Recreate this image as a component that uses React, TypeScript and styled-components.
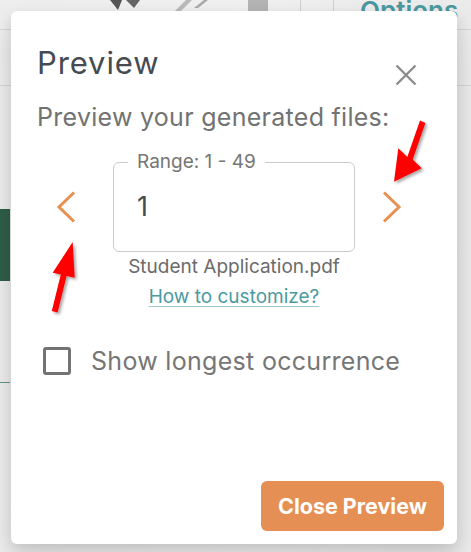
import { FC } from "react"
import styled, { createGlobalStyle } from "styled-components"

const GlobalStyle = createGlobalStyle`
	html, body {
		margin: 0;
		padding: 0;
		width: 471px;
		height: 552px;
		overflow: hidden;
		font-family: Inter, "Liberation Sans", sans-serif;
	}
`

const App: FC = () => {
	return (
		<Page>
			<GlobalStyle />
			<AppBackdrop>
				<TopBar>
					<ToolIcon width="34" height="12" viewBox="0 0 34 12">
						<path d="M2 0 L14 0 L10 10 Z" fill="#555" />
						<path d="M18 0 L32 0 L26 8 Z" fill="#666" />
					</ToolIcon>
					<ToolIcon width="34" height="12" viewBox="0 0 34 12">
						<path d="M0 12 L12 0 L18 0 L6 12 Z" fill="#bbb" />
						<path d="M20 8 L30 0 L34 0 L24 8 Z" fill="#aaa" />
					</ToolIcon>
					<GrayBlock />
					<Divider />
					<Divider />
					<OptionsTab>Options</OptionsTab>
				</TopBar>
				<SubBar />
				<SideContent>
					<GreenBlock />
					<GreenLine />
				</SideContent>
			</AppBackdrop>

			<Dialog>
				<Header>
					<Title>Preview</Title>
					<CloseButton aria-label="close">
						<svg width="22" height="22" viewBox="0 0 22 22">
							<path
								d="M1.5 1.5 L20.5 20.5 M20.5 1.5 L1.5 20.5"
								stroke="#8c8c8c"
								strokeWidth="2.4"
								fill="none"
							/>
						</svg>
					</CloseButton>
				</Header>
				<Subtitle>Preview your generated files:</Subtitle>

				<PagerRow>
					<NavButton side="left" aria-label="previous">
						<svg width="20" height="32" viewBox="0 0 20 32">
							<polyline
								points="18,1.5 3,16 18,30.5"
								stroke="#e8904f"
								strokeWidth="3"
								fill="none"
							/>
						</svg>
					</NavButton>
					<FieldColumn>
						<FieldBox>
							<FieldLegend>Range: 1 - 49</FieldLegend>
							<FieldValue>1</FieldValue>
						</FieldBox>
						<FileName>Student Application.pdf</FileName>
						<HelpLink href="#">How to customize?</HelpLink>
					</FieldColumn>
					<NavButton side="right" aria-label="next">
						<svg width="20" height="32" viewBox="0 0 20 32">
							<polyline
								points="2,1.5 17,16 2,30.5"
								stroke="#e8904f"
								strokeWidth="3"
								fill="none"
							/>
						</svg>
					</NavButton>
				</PagerRow>

				<CheckRow>
					<CheckBox />
					<CheckLabel>Show longest occurrence</CheckLabel>
				</CheckRow>

				<Footer>
					<PrimaryButton>Close Preview</PrimaryButton>
				</Footer>
			</Dialog>

			{/* red annotation arrows drawn on top of the screenshot */}
			<Annotations width="471" height="552" viewBox="0 0 471 552">
				<defs>
					<filter id="arrowShadow" x="-50%" y="-50%" width="200%" height="200%">
						<feDropShadow dx="2" dy="2" stdDeviation="1.5" floodColor="#000" floodOpacity="0.35" />
					</filter>
				</defs>
				<polygon
					filter="url(#arrowShadow)"
					fill="#ff0000"
					points="72.7,242 74.7,277.7 66.6,276 57.6,312.4 51.8,311 60.8,274.5 52.7,272.7"
				/>
				<polygon
					filter="url(#arrowShadow)"
					fill="#ff0000"
					points="394,181.7 398.3,148.3 407.3,157 420,120.4 425.4,123 412.7,159.6 421.7,168.3"
				/>
			</Annotations>
		</Page>
	)
}

const Page = styled.div`
	position: relative;
	width: 471px;
	height: 552px;
	overflow: hidden;
	background: linear-gradient(90deg, #eeeeee 0%, #f1f1f1 50%, #ebebeb 100%);
`

const AppBackdrop = styled.div`
	display: flex;
	flex-direction: column;
	height: 100%;
`

const TopBar = styled.div`
	display: flex;
	align-items: flex-start;
	height: 29px;
	border-bottom: 1px solid #d6d6d6;
	padding-left: 108px;
	gap: 32px;
`

const ToolIcon = styled.svg`
	display: block;
`

const GrayBlock = styled.div`
	width: 20px;
	height: 12px;
	background: #b5b5b5;
	margin-left: 8px;
`

const Divider = styled.div`
	width: 1px;
	height: 12px;
	background: #d0d0d0;
`

const OptionsTab = styled.div`
	margin-left: -6px;
	margin-top: -4px;
	font-size: 26px;
	line-height: 30px;
	font-weight: 600;
	color: #4b9aa0;
`

const SubBar = styled.div`
	height: 55px;
	border-bottom: 1px solid #d6d6d6;
`

const SideContent = styled.div`
	display: flex;
	flex-direction: column;
	padding-top: 123px;
`

const GreenBlock = styled.div`
	width: 10px;
	height: 72px;
	background: #2f5f4a;
`

const GreenLine = styled.div`
	width: 10px;
	height: 1px;
	margin-top: 101px;
	background: #5d9a84;
`

const Dialog = styled.div`
	position: absolute;
	top: 11px;
	left: 11px;
	width: 446px;
	height: 533px;
	box-sizing: border-box;
	display: flex;
	flex-direction: column;
	padding: 34px 0 13px;
	background: #ffffff;
	border-radius: 6px;
	box-shadow: 0 6px 14px rgba(0, 0, 0, 0.12), 0 14px 34px rgba(0, 0, 0, 0.1);
`

const Header = styled.div`
	display: flex;
	justify-content: space-between;
	align-items: flex-start;
	padding: 0 40px 0 26px;
`

const Title = styled.h2`
	margin: 0;
	font-size: 31px;
	line-height: 36px;
	font-weight: 400;
	letter-spacing: 0.9px;
	color: #464b51;
`

const CloseButton = styled.button`
	margin-top: 19px;
	padding: 0;
	border: none;
	background: none;
	width: 22px;
	height: 22px;
	cursor: pointer;

	svg {
		display: block;
	}
`

const Subtitle = styled.p`
	margin: 16px 26px 0;
	font-size: 25px;
	line-height: 30px;
	letter-spacing: 0.28px;
	color: #727272;
`

const PagerRow = styled.div`
	display: flex;
	align-items: flex-start;
	margin-top: 30px;
	padding-left: 45px;
`

const NavButton = styled.button<{ side: "left" | "right" }>`
	margin-top: 29px;
	margin-left: ${props => (props.side === "right" ? "27px" : "0")};
	margin-right: ${props => (props.side === "left" ? "37px" : "0")};
	padding: 0;
	border: none;
	background: none;
	cursor: pointer;

	svg {
		display: block;
	}
`

const FieldColumn = styled.div`
	display: flex;
	flex-direction: column;
	align-items: center;
	width: 242px;
`

const FieldBox = styled.div`
	position: relative;
	box-sizing: border-box;
	width: 242px;
	height: 90px;
	display: flex;
	align-items: center;
	padding-left: 23px;
	border: 1px solid #cbcbcb;
	border-radius: 6px;
`

const FieldLegend = styled.span`
	position: absolute;
	top: -13px;
	left: 14px;
	padding: 0 9px;
	background: #ffffff;
	font-size: 19px;
	line-height: 24px;
	color: #767676;
`

const FieldValue = styled.span`
	font-size: 27px;
	line-height: 32px;
	color: #464b51;
`

const FileName = styled.div`
	margin-top: 4px;
	font-size: 19px;
	line-height: 22px;
	color: #6b6b6b;
	white-space: nowrap;
`

const HelpLink = styled.a`
	margin-top: 8px;
	font-size: 19px;
	line-height: 22px;
	color: #4b9aa0;
	text-decoration: underline;
	text-decoration-color: #9ccacd;
	text-underline-offset: 3px;
`

const CheckRow = styled.div`
	display: flex;
	align-items: center;
	gap: 20px;
	margin-top: 38px;
	padding-left: 32px;
`

const CheckBox = styled.span`
	box-sizing: border-box;
	width: 28px;
	height: 28px;
	border: 3px solid #737373;
	border-radius: 3px;
	background: #ffffff;
`

const CheckLabel = styled.span`
	font-size: 25px;
	line-height: 30px;
	letter-spacing: 0.3px;
	color: #767676;
`

const Footer = styled.div`
	display: flex;
	justify-content: flex-end;
	margin-top: auto;
	padding-right: 13px;
`

const PrimaryButton = styled.button`
	width: 183px;
	height: 50px;
	border: none;
	border-radius: 6px;
	background: #e68f54;
	color: #ffffff;
	font-family: Inter, "Liberation Sans", sans-serif;
	font-size: 21.5px;
	font-weight: 700;
	cursor: pointer;
`

const Annotations = styled.svg`
	position: absolute;
	top: 0;
	left: 0;
	pointer-events: none;
`

export default App
